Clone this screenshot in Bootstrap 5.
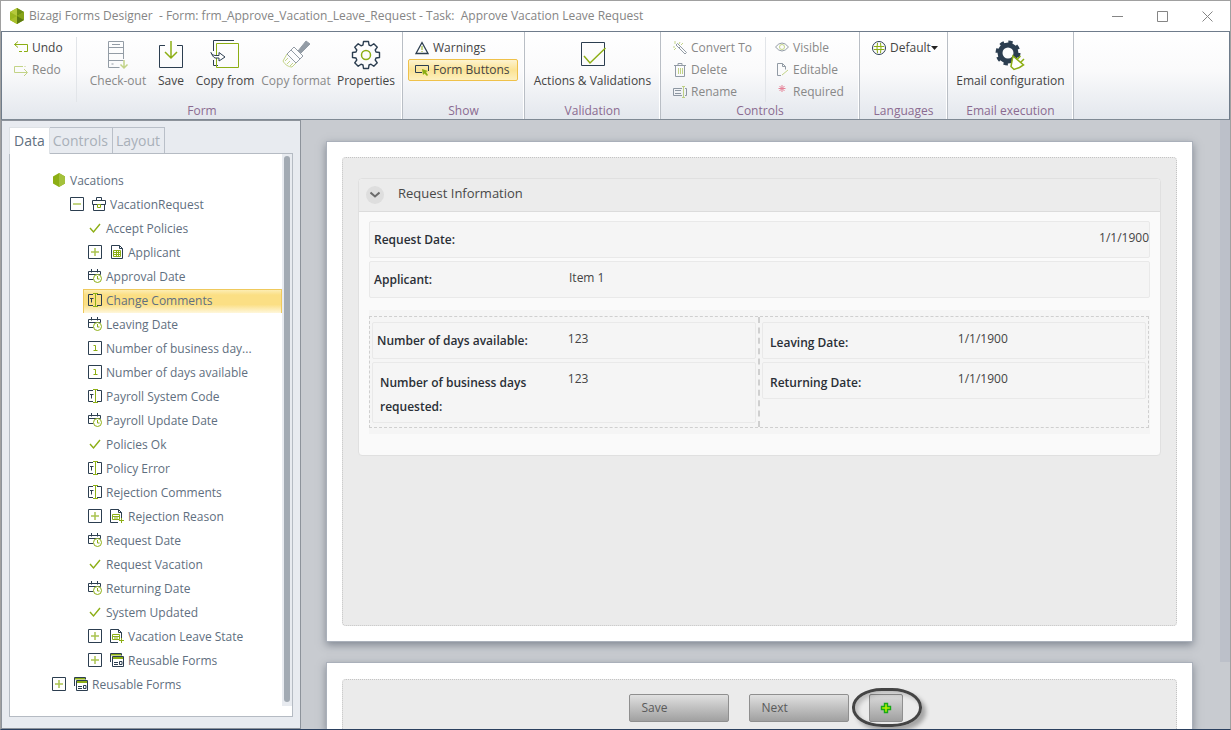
<!DOCTYPE html>
<html lang="en">
<head>
<meta charset="utf-8">
<meta name="viewport" content="width=device-width, initial-scale=1">
<title>Bizagi Forms Designer</title>
<link href="https://cdn.jsdelivr.net/npm/bootstrap@5.3.0/dist/css/bootstrap.min.css" rel="stylesheet">
<style>
:root{--navy:#2c3e50;--leaf:#8cae14}
body{font-family:"Open Sans","Noto Sans",sans-serif;font-size:12px;line-height:22px;color:#444}
button{font:inherit;color:inherit;background:none;border:0;padding:0}
svg{display:block;flex:none;fill:none;stroke:var(--navy);stroke-width:1}
.g{stroke:var(--leaf)}
.gf{fill:var(--leaf);stroke:none}
.off{color:#888}
.off svg{opacity:.5}
.win{height:100vh;border:1px solid #a0a0a0;border-bottom-color:#2b405f;overflow:hidden}
.titlebar{height:30px;padding-left:8px;color:#858585;background:#fff}
.titlebar pre{font:inherit;overflow:visible}
.capbtn{width:45px;height:28px}
.capbtn svg{margin:auto;stroke:#858585}
.ribbon{border:1px solid #6f7c8b;border-bottom-color:#7f8994;background:linear-gradient(#fff,#fafafb 45%,#e3e7ed);height:89px}
.grp{border-right:1px solid #b9bec5;box-shadow:inset -1px 0 #fff;padding-top:5px}
.grp-body{height:65px}
.grp-name{line-height:17px;text-align:center;color:#8b6b90}
.w-form{width:401px}.w-show{width:122px}.w-val{width:136px}.w-ctl{width:199px}.w-lang{width:88px}.w-mail{width:126px}
.sm-col{padding-left:12px}
.sm-btn{display:flex;align-items:center;height:22px;white-space:nowrap}
.sm-btn svg{margin-right:4px}
.big{display:flex;flex-direction:column;align-items:center;white-space:nowrap;padding-top:2px;line-height:20px}
.form-grid{display:grid;grid-template-columns:83px 66px 40px 68px 74px 66px}
.form-grid .sm-col{margin-right:8px}
.ctl-col{width:105px}
.ctl-col2{padding-left:9px}
.line-r{border-right:1px solid #e2e5e9}
.toggled{border:1px solid #efc14a;background:linear-gradient(#fdf3cf,#fbe394 50%,#fdf0bf);border-radius:2px;width:110px;margin-left:-7px;padding-left:6px}
.work{min-height:0}
.side{width:300px;background:#e8ebf0;border:1px solid #8d939b;padding:6px 7px 11px}
.side .nav-tabs{border:0}
.side .nav-link{font-size:14px;line-height:20px;padding:3px 4px 2px 3px;border:1px solid #b9bfc8;border-left-width:0;border-bottom:0;border-radius:0;color:#a9b0b9;margin:0}
.side .nav-item:first-child .nav-link{border-left-width:1px;padding-left:4px}
.side .nav-link.active{background:#fff;color:#5f6f80;margin-bottom:-1px;position:relative;padding-bottom:3px}
.pane{border:1px solid #b5bbc3;background:#fff;min-height:0}
.tree,.tree ul{list-style:none;margin:0;padding:0}
.tree{padding:15px 0 0 37px;color:#5f6f80;overflow:hidden}
.tree ul{padding-left:18px}
.node{display:flex;align-items:center;height:24px;padding-left:5px;white-space:nowrap}
.node>svg{margin:0 4px 2px 0}
.node>button{margin:0 8px 2px 0}
.node.sel{background:linear-gradient(#fdf0bd,#fbdf84 25%,#fbdf84 65%,#fff7dc);box-shadow:inset 0 1px #efc95c,inset 1px 0 #efc95c,inset -1px 0 #efc95c}
.track{width:10px;background:#e8ebf0;padding:2px 2px 4px;margin-bottom:10px}
.thumb{background:#a2aab3;border-radius:3px;height:100%}
.stage{background:#c8cbd0;min-width:0}
.sheets{padding:22px 28px 0 26px;overflow:hidden;min-width:0}
.sheet{background:#fff;padding:15px;box-shadow:0 0 0 1px #aab0ba,0 3px 8px 1px rgba(60,70,85,.5)}
.sheet-foot{flex:0 0 66px;min-height:0;height:66px;margin-top:22px;padding:16px 15px 0}
.zone{background:#ebebeb;border:1px dotted #c4c4c4;border-radius:4px;padding:20px 15px}
.stage-scroll{width:10px;background:#bcc0c9;margin-bottom:67px}
.fcard{border:1px solid #e0e0e0;border-radius:4px;background:#fafafa;color:#333}
.fcard-head{height:33px;background:#ececec;border-bottom:1px solid #dcdcdc;padding-left:7px;font-size:13px;line-height:20px;color:#484848;border-radius:4px 4px 0 0}
.fcard-title{padding:0 0 4px 14px}
.chev{width:18px;height:18px;border-radius:50%;background:#dedede}
.chev svg{margin:auto;stroke:#6c6c6c}
.fcard-body{padding:9px 10px 21px}
.field{border:1px solid #e9e9e9;border-radius:2px;background:#f5f5f5;min-height:37px;margin-bottom:3px}
.field dt,.field dd{margin:0;line-height:24px}
.field dt{font-weight:600;color:#2a2f36;padding:6px 4px 5px}
.field dd{padding-top:4px;flex:1;color:#444}
.wide dt{width:199px}
.half dt{width:51%}
.inset-lbl dt{padding:8px 7px 3px}
.cols{background:#f5f5f5;margin-top:12px;padding:6px 1px 6px 0}
.cols-in{border:1px dashed #cfcfcf}
.colbox{flex:1;padding:5px 2px 1px}
.colbox+.colbox{border-left:2px dashed #cfcfcf}
.actions{height:90px;padding:14px 0 0 12px;gap:20px}
.abtn{width:100px;height:28px;border:1px solid #8f8f8f;border-radius:2px;background:linear-gradient(#e0e0e0,#a0a0a0);text-align:left;padding-left:12px;color:#5a5a5a}
.addbtn{width:34px;height:28px;border:1px solid #8f8f8f;border-radius:2px;background:linear-gradient(#dadada,#a0a0a0)}
.addbtn svg{margin:auto}
.ring{position:absolute;left:-17px;top:-6px;width:70px;height:39px;border:3px solid #444;border-radius:30px/19px;box-shadow:4px 4px 4px rgba(0,0,0,.3),inset 3px 3px 4px rgba(0,0,0,.2);pointer-events:none}
</style>
</head>
<body>
<svg width="0" height="0" class="position-absolute">
<symbol id="cal" viewBox="0 0 14 14"><path d="M5.500 10.500h-5v-8h12v3M.5 5.500h12M3.500 0v3.500M9.500 0v3.500"/><circle cx="9.500" cy="9.500" r="4" fill="#fff" class="g"/><path class="g" d="M9.500 7v3h2"/></symbol>
<symbol id="txt" viewBox="0 0 14 14"><path d="M5 1.500H.5v11H5M9 1.500h4.500v11H9M2 5.500h3.500M3.500 5v4.500"/><path class="g" d="M7.500 1v12M5 .5h5M5 13.500h5"/></symbol>
<symbol id="num" viewBox="0 0 14 14"><path d="M.5.5h13v13H.5z"/><path class="g" d="M5.500 4.500h2V9.500M5.500 9.500h4"/></symbol>
<symbol id="chk" viewBox="0 0 14 14"><path class="g" stroke-width="1.400" d="M2 7l3.500 4L12 3"/></symbol>
<symbol id="plus" viewBox="0 0 14 14"><path d="M.5.5h13v13H.5z" fill="#fff"/><path class="g" stroke-width="1.500" opacity=".75" d="M3 7h8M7 3v8"/></symbol>
<symbol id="minus" viewBox="0 0 14 14"><path d="M.5.5h13v13H.5z" fill="#fff"/><path class="g" stroke-width="1.500" opacity=".7" d="M3 7h8"/></symbol>
<symbol id="sheet" viewBox="0 0 14 14"><path d="M1.500.5h8l3 3v10h-11zM9.500.5v3h3"/><path class="g" d="M3.500 5.500h7v6h-7zM3.500 7.500h7M3.500 9.500h7M6.500 5v7M8.500 5v7"/></symbol>
<symbol id="param" viewBox="0 0 14 14"><path d="M8 13.500H.5V.5h8l3 3V9M8.500.5v3h3"/><path class="g" d="M2.500 5.500h7v5h-7zM2.500 7.500h7M4 9h4M11.500 9v5M9 11.500h5"/></symbol>
<symbol id="forms" viewBox="0 0 14 14"><path d="M.5 9V.5h11v2M2.500 3.500h11v10h-11zM4 9.500h4M4 11.500h4M9.500 8.500h2.500v3H9.500z"/><path class="gf" d="M1 1h10v1.500H1zM3 4h10v2H3z"/></symbol>
</svg>
<div class="win d-flex flex-column">
<header class="titlebar d-flex align-items-center">
<svg width="16" height="18" viewBox="0 0 16 18" class="me-1"><g stroke="none"><path d="M8 1l7 4v8l-7 4-7-4V5z" fill="#9ab61f"/><path d="M8 1l7 4-7 4z" fill="#6f8f12"/><path d="M8 1L1 5l7 4z" fill="#b5c93c"/><path d="M15 13V5L8 9z" fill="#86a317"/><path d="M8 17l7-4-7-4z" fill="#5c7a10"/><path d="M1 13l7 4V9z" fill="#a9c02b"/></g></svg>
<pre class="m-0 flex-grow-1">Bizagi Forms Designer  - Form: frm_Approve_Vacation_Leave_Request - Task:  Approve Vacation Leave Request</pre>
<button class="capbtn" aria-label="Minimize"><svg width="11" height="11"><path d="M0 5.500h11"/></svg></button>
<button class="capbtn" aria-label="Maximize"><svg width="11" height="11"><path d="M.5.5h10v10H.5z"/></svg></button>
<button class="capbtn" aria-label="Close"><svg width="11" height="11"><path d="M.5.5l10 10M10.500.5l-10 10"/></svg></button>
</header>

<nav class="ribbon d-flex flex-shrink-0">
<section class="grp w-form">
<div class="grp-body form-grid">
<div class="sm-col line-r">
<button class="sm-btn"><svg width="14" height="14"><path class="g" d="M4 .5L.5 3.500 4 6.500M.5 3.500h13v7H10M8 10.500H5"/></svg>Undo</button>
<button class="sm-btn off"><svg width="14" height="14"><path class="g" d="M9 3.500H.5v6H13M10.500 3.500h1M10 6l3.500 3.500L10 13"/></svg>Redo</button>
</div>
<button class="big off"><svg width="28" height="32"><path d="M19.500 20V2.500h-15v26h11M4.500 8.500h15M4.500 14.500h15M4.500 21.500h15M8 5.500h8M7.500 25h2"/><path class="g" stroke-width="1.500" d="M20 21v8M16.500 25.500L20 29l3.500-3.500"/></svg>Check-out</button>
<button class="big"><svg width="28" height="32"><path d="M8 6.500H2.500v22h23v-22H20"/><path class="g" stroke-width="1.500" d="M14 2v16M8 13l6 6 6-6"/></svg>Save</button>
<button class="big"><svg width="30" height="32"><path d="M3.500 12V1.500H24M3.500 21v5.500H8"/><path class="g" d="M6.500 4.500h22v24h-22z"/><path fill="#fff" d="M1 13.500c1 2 2 3 5 3h3v-3l6 4.500-6 4v-3H5c-2-1-3-3-4-5.500z"/></svg>Copy from</button>
<button class="big off"><svg width="30" height="32"><path fill="#2c3e50" d="M17 12l8-10 4 3-9 9z"/><path fill="#fff" d="M13 8l9 9-3 3L10 11zM10 11l-4 4 9 9 4-4"/><path class="g" d="M6 15l-4 7c2 4 6 6 9 6l4-4M4 22l3-3M6 25l3-3M9 27l3-3"/></svg>Copy format</button>
<button class="big"><svg width="30" height="32" viewBox="-15 -16 30 32"><path stroke-width="1.400" stroke-linejoin="round" d="M-2.500-13.500h5L3-10 5-9.200l2.800-2.100 3.500 3.500L9.200-5 10-3l3.500.5v5L10 3 9.200 5l2.100 2.800-3.500 3.500L5 9.200 3 10l-.5 3.500h-5L-3 10l-2-.8-2.800 2.100-3.500-3.500L-9.200 5-10 3l-3.500-.5v-5L-10-3l.8-2-2.100-2.800 3.500-3.500L-5-9.200l2-.8z"/><circle class="g" r="4.500" stroke-width="1.500"/></svg>Properties</button>
</div>
<div class="grp-name">Form</div>
</section>
<section class="grp w-show">
<div class="grp-body sm-col">
<button class="sm-btn"><svg width="14" height="14"><path stroke-width="1.300" d="M7 1.500l6 11H1z"/><path class="g" d="M7 5v4M7 10v1"/></svg>Warnings</button>
<button class="sm-btn toggled"><svg width="14" height="14"><path d="M7 9.500H.5v-7h13V8"/><path class="gf" d="M7 6l6 2-2 1 2 3-1 1-2.500-2.500L8 12z"/></svg>Form Buttons</button>
</div>
<div class="grp-name">Show</div>
</section>
<section class="grp w-val">
<div class="grp-body d-flex justify-content-center">
<button class="big"><svg width="28" height="32"><path d="M3.500 3.500h23v23h-23z"/><path class="g" stroke-width="1.500" d="M6 17l6 7L27.500 9"/></svg>Actions &amp; Validations</button>
</div>
<div class="grp-name">Validation</div>
</section>
<section class="grp w-ctl">
<div class="grp-body d-flex off">
<div class="sm-col line-r ctl-col">
<button class="sm-btn"><svg width="14" height="14"><path d="M3 4l9 9 1.500-1.500-9-9zM6 7l1.500-1.500"/><path class="g" d="M2 0v3M0 6h2M7 1L6 3M1 9l2-2M10 2L8 4"/></svg>Convert To</button>
<button class="sm-btn"><svg width="14" height="14"><path d="M1 2.500h12M5 2V.5h4V2M2.500 3v10.500h9V3"/><path class="g" d="M5.500 5v6M7.500 5v6M9.500 5v6"/></svg>Delete</button>
<button class="sm-btn"><svg width="14" height="14"><path d="M9 3.500H.5v7H9M2 5.500h6M2 8.500h6M12 3.500h1.500v7H12"/><path class="g" d="M10.500 2v10M9 1.500h3M9 12.500h3"/></svg>Rename</button>
</div>
<div class="ctl-col2">
<button class="sm-btn"><svg width="14" height="14"><path d="M.5 6Q7-2 13.500 6 7 14 .5 6z"/><circle class="g" cx="7" cy="6" r="2.500"/></svg>Visible</button>
<button class="sm-btn"><svg width="14" height="14"><path d="M6 12.500H2.500V.5h5l3 3v3M7.500.5v3h3"/><path class="g" d="M7 12l6-5"/></svg>Editable</button>
<button class="sm-btn"><svg width="14" height="14"><path stroke="#dc143c" d="M7 0v7M3.500 3.500h7M4.500 1l5 5M9.500 1l-5 5"/></svg>Required</button>
</div>
</div>
<div class="grp-name">Controls</div>
</section>
<section class="grp w-lang">
<div class="grp-body sm-col">
<button class="sm-btn"><svg width="14" height="14"><circle cx="7" cy="7" r="6.500"/><path class="g" d="M5.500 2q-1 5 0 10M8.500 2q1 5 0 10M2 5.500h10M2 8.500h10"/></svg>Default<svg width="7" height="4" class="m-0"><path d="M0 0h7L3.500 4z" fill="#222" stroke="none"/></svg></button>
</div>
<div class="grp-name">Languages</div>
</section>
<section class="grp w-mail">
<div class="grp-body d-flex justify-content-center">
<button class="big"><svg width="30" height="32"><circle cx="13" cy="14" r="8" stroke-width="5"/><circle cx="13" cy="14" r="11" stroke-width="3" stroke-dasharray="4.300 4.340"/><path class="g" stroke-width="1.500" fill="#fff" d="M18 17l10.500 9-4 2.500-5.500 2-3-3 1-5.500zM22.500 20l3-3M26 23l3-3"/></svg>Email configuration</button>
</div>
<div class="grp-name">Email execution</div>
</section>
</nav>

<main class="work d-flex flex-grow-1">
<aside class="side d-flex flex-column flex-shrink-0">
<ul class="nav nav-tabs">
<li class="nav-item"><button class="nav-link active">Data</button></li>
<li class="nav-item"><button class="nav-link">Controls</button></li>
<li class="nav-item"><button class="nav-link">Layout</button></li>
</ul>
<div class="pane d-flex flex-grow-1">
<ul class="tree flex-grow-1">
<li><div class="node"><svg width="14" height="14"><path class="gf" d="M7 0l6 3.500v7L7 14l-6-3.500v-7z"/><path d="M7 0l6 3.500v7L7 14z" fill="#a4c13c" stroke="none"/></svg>Vacations</div>
<ul>
<li><div class="node"><button aria-label="Collapse"><svg width="14" height="14"><use href="#minus"/></svg></button><svg width="14" height="14"><path d="M.5 3.500h13v4H.5zM4.500 3V.5h5V3M1.500 8v5.500h11V8"/><path class="g" d="M5.500 7.500h3v3h-3z" fill="#fff"/></svg>VacationRequest</div>
<ul>
<li class="node"><svg width="14" height="14"><use href="#chk"/></svg>Accept Policies</li>
<li class="node"><button aria-label="Expand"><svg width="14" height="14"><use href="#plus"/></svg></button><svg width="14" height="14"><use href="#sheet"/></svg>Applicant</li>
<li class="node"><svg width="14" height="14"><use href="#cal"/></svg>Approval Date</li>
<li class="node sel"><svg width="14" height="14"><use href="#txt"/></svg>Change Comments</li>
<li class="node"><svg width="14" height="14"><use href="#cal"/></svg>Leaving Date</li>
<li class="node"><svg width="14" height="14"><use href="#num"/></svg>Number of business day...</li>
<li class="node"><svg width="14" height="14"><use href="#num"/></svg>Number of days available</li>
<li class="node"><svg width="14" height="14"><use href="#txt"/></svg>Payroll System Code</li>
<li class="node"><svg width="14" height="14"><use href="#cal"/></svg>Payroll Update Date</li>
<li class="node"><svg width="14" height="14"><use href="#chk"/></svg>Policies Ok</li>
<li class="node"><svg width="14" height="14"><use href="#txt"/></svg>Policy Error</li>
<li class="node"><svg width="14" height="14"><use href="#txt"/></svg>Rejection Comments</li>
<li class="node"><button aria-label="Expand"><svg width="14" height="14"><use href="#plus"/></svg></button><svg width="14" height="14"><use href="#param"/></svg>Rejection Reason</li>
<li class="node"><svg width="14" height="14"><use href="#cal"/></svg>Request Date</li>
<li class="node"><svg width="14" height="14"><use href="#chk"/></svg>Request Vacation</li>
<li class="node"><svg width="14" height="14"><use href="#cal"/></svg>Returning Date</li>
<li class="node"><svg width="14" height="14"><use href="#chk"/></svg>System Updated</li>
<li class="node"><button aria-label="Expand"><svg width="14" height="14"><use href="#plus"/></svg></button><svg width="14" height="14"><use href="#param"/></svg>Vacation Leave State</li>
<li class="node"><button aria-label="Expand"><svg width="14" height="14"><use href="#plus"/></svg></button><svg width="14" height="14"><use href="#forms"/></svg>Reusable Forms</li>
</ul></li>
</ul></li>
<li class="node"><button aria-label="Expand"><svg width="14" height="14"><use href="#plus"/></svg></button><svg width="14" height="14"><use href="#forms"/></svg>Reusable Forms</li>
</ul>
<div class="track"><div class="thumb"></div></div>
</div>
</aside>

<div class="stage d-flex flex-grow-1">
<div class="sheets d-flex flex-column flex-grow-1">
<section class="sheet d-flex flex-column flex-grow-1">
<div class="zone flex-grow-1">
<div class="fcard">
<div class="fcard-head d-flex align-items-center"><button class="chev d-flex" aria-label="Collapse group"><svg width="10" height="8"><path stroke-width="2" d="M.5 1.500L5 5.500l4.500-4"/></svg></button><span class="fcard-title">Request Information</span></div>
<div class="fcard-body">
<dl class="field wide d-flex"><dt>Request Date:</dt><dd class="text-end">1/1/1900</dd></dl>
<dl class="field wide d-flex"><dt>Applicant:</dt><dd>Item 1</dd></dl>
<div class="cols"><div class="cols-in d-flex">
<div class="colbox">
<dl class="field half d-flex"><dt>Number of days available:</dt><dd>123</dd></dl>
<dl class="field half inset-lbl d-flex"><dt>Number of business days requested:</dt><dd>123</dd></dl>
</div>
<div class="colbox">
<dl class="field half inset-lbl d-flex"><dt>Leaving Date:</dt><dd>1/1/1900</dd></dl>
<dl class="field half inset-lbl d-flex"><dt>Returning Date:</dt><dd>1/1/1900</dd></dl>
</div>
</div></div>
</div>
</div>
</div>
</section>
<section class="sheet sheet-foot">
<div class="zone actions d-flex justify-content-center align-items-start">
<button class="abtn">Save</button><button class="abtn">Next</button>
<div class="position-relative"><button class="addbtn d-flex" aria-label="Add button"><svg width="12" height="12"><path d="M4.500 1.500h3v3h3v3h-3v3h-3v-3h-3v-3h3z" fill="#b6f000" stroke="#18a818" stroke-width="1.400"/></svg></button><span class="ring"></span></div>
</div>
</section>
</div>
<div class="stage-scroll"></div>
</div>
</main>
</div>
<script src="https://cdn.jsdelivr.net/npm/bootstrap@5.3.0/dist/js/bootstrap.bundle.min.js"></script>
</body>
</html>
